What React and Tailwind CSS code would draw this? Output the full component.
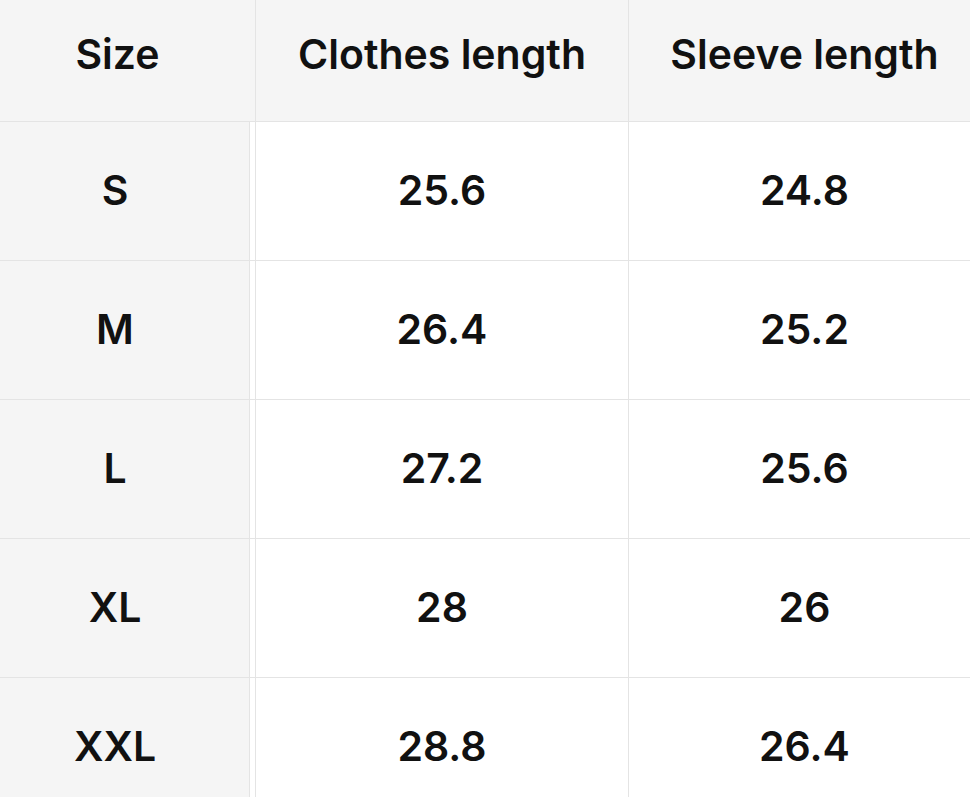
const ROWS = [
  ['S', '25.6', '24.8'],
  ['M', '26.4', '25.2'],
  ['L', '27.2', '25.6'],
  ['XL', '28', '26'],
  ['XXL', '28.8', '26.4'],
];

function Row({ cells, header }) {
  const h = header ? 'h-[122px]' : 'h-[139px]';
  const pad = header ? 'pb-[12px]' : '';
  return (
    <div className={`flex ${h} border-b border-[#e4e4e4] ${header ? 'bg-[#f5f5f5]' : 'bg-white'}`}>
      <div
        className={`w-[255px] shrink-0 flex items-center justify-center pr-[20px] ${pad} ${
          header ? '' : 'bg-[#f5f5f5] border-r-[5px] border-r-white shadow-[inset_-1px_0_0_#e4e4e4]'
        }`}
      >
        {cells[0]}
      </div>
      <div className={`w-[373px] shrink-0 flex items-center justify-center border-l border-[#e4e4e4] ${pad}`}>
        {cells[1]}
      </div>
      <div className={`flex-1 flex items-center justify-center border-l border-[#e4e4e4] pl-[10px] ${pad}`}>
        {cells[2]}
      </div>
    </div>
  );
}

export default function App() {
  return (
    <div
      className="w-[970px] h-[797px] overflow-hidden bg-white text-[#111] font-semibold"
      style={{ fontFamily: 'Inter, "Liberation Sans", sans-serif' }}
    >
      <div className="text-[41px]">
        <Row header cells={['Size', 'Clothes length', 'Sleeve length']} />
        {ROWS.map((r) => (
          <Row key={r[0]} cells={r} />
        ))}
      </div>
    </div>
  );
}
